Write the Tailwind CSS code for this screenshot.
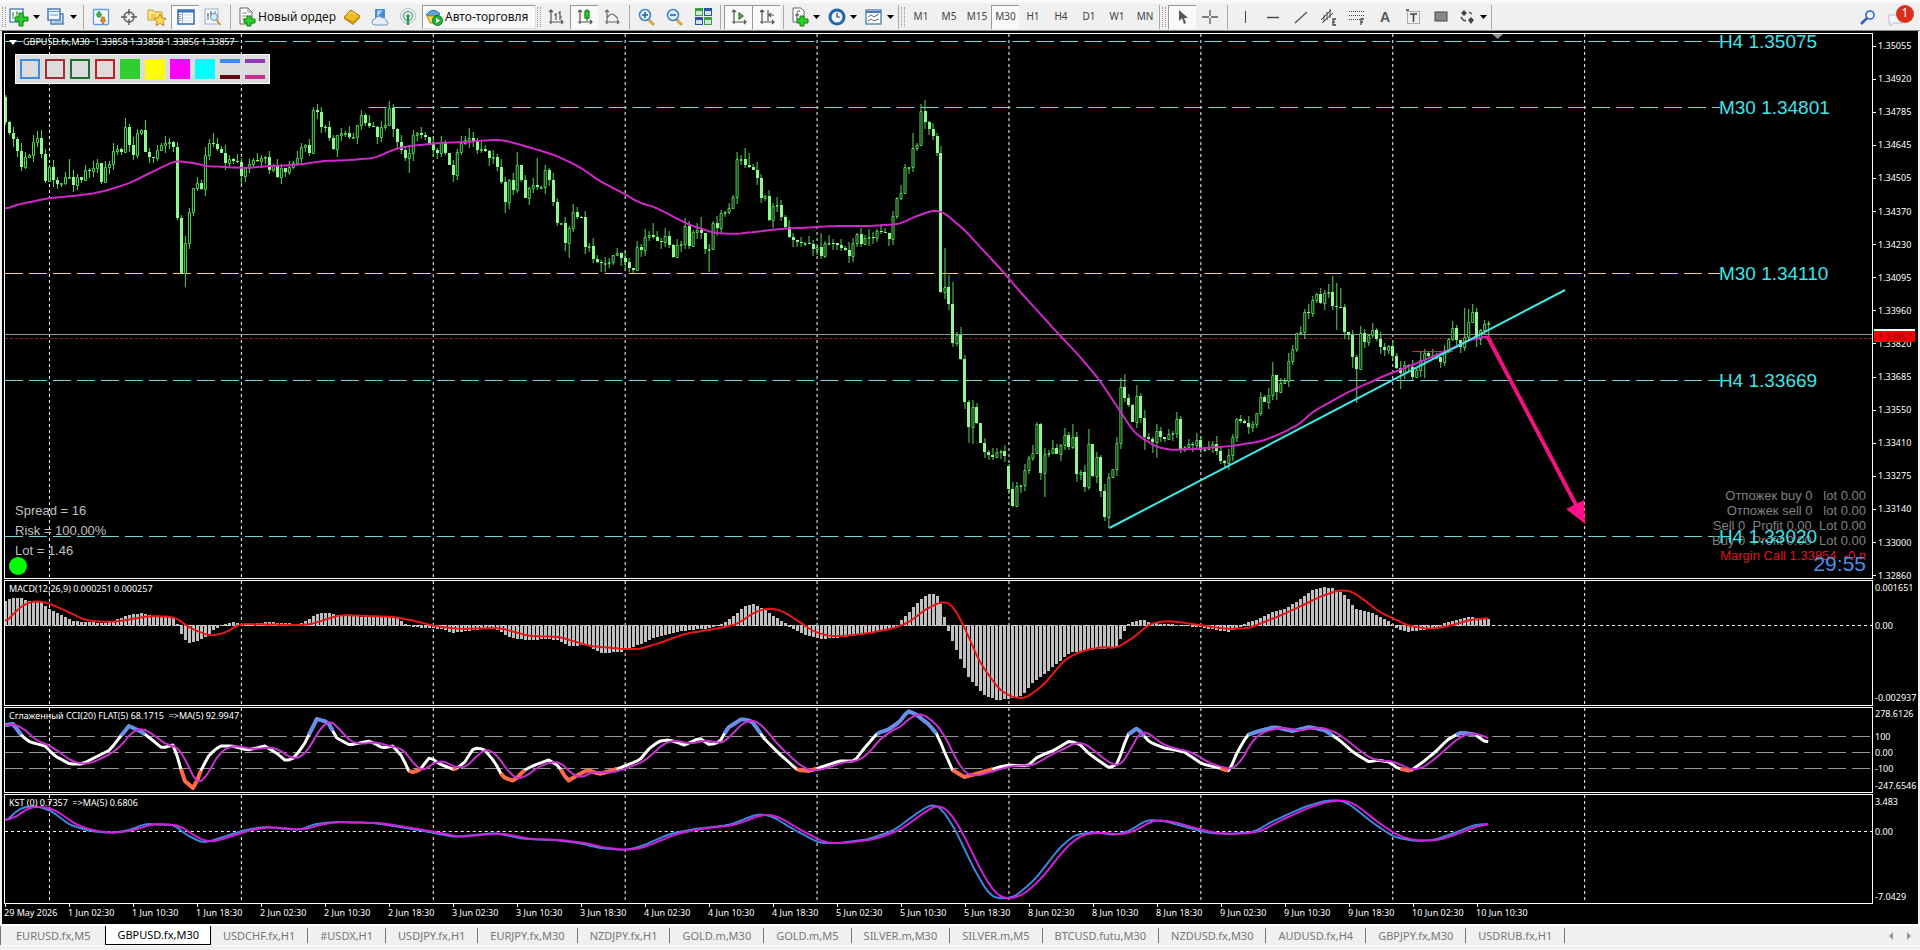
<!DOCTYPE html>
<html lang="ru">
<head>
<meta charset="UTF-8">
<meta name="viewport" content="width=device-width, initial-scale=1.0">
<title>GBPUSD.fx,M30</title>
<script src="https://cdn.jsdelivr.net/npm/@tailwindcss/browser@4"></script>
</head>
<body class="flex h-screen flex-col overflow-hidden bg-[#f0f0f0] font-['Noto_Sans',sans-serif]">

<!-- toolbar -->
<header class="flex h-[31px] shrink-0 items-center border-t-[3px] border-b border-t-[#fafafa] border-b-[#8a8a8a] bg-[#f0f0f0] text-xs text-[#111]">
  <span class="ml-0.5 h-5 w-1 border-x border-dotted border-[#999]"></span>
  <button aria-label="Новый график" class="flex h-6 w-[37px] items-center justify-center gap-1">
    <svg width="20" height="20" viewBox="0 0 20 20"><rect x="1" y="2" width="13" height="13" fill="#fff" stroke="#5b87b5" stroke-width="1.500"/><path d="M4 5v7M3 7h2M8 4v6M7 6h2" stroke="#4a8a4a" fill="none"/><path d="M10 6h4v4h5v4h-5v5h-4v-5H6v-4h4z" fill="#2bd12b" stroke="#118011"/></svg>
    <svg width="7" height="4"><path d="M0 0h7l-3.500 4z"/></svg>
  </button>
  <button aria-label="Профили" class="flex h-6 w-[37px] items-center justify-center gap-1">
    <svg width="20" height="20" viewBox="0 0 20 20"><rect x="5" y="7" width="12" height="10" fill="#dcebfa" stroke="#5b7fa8" stroke-width="1.500"/><rect x="2" y="2" width="12" height="11" fill="#eef6ff" stroke="#4a7ab0" stroke-width="1.500"/><path d="M2 4.500h12M4 8h8M8 15h8" stroke="#6a9bd0"/></svg>
    <svg width="7" height="4"><path d="M0 0h7l-3.500 4z"/></svg>
  </button>
  <span class="mx-[3px] h-6 w-px bg-[#aaa]"></span>
  <button aria-label="Обзор рынка" class="flex h-6 w-7 items-center justify-center"><svg width="18" height="18" viewBox="0 0 18 18"><rect x="1.500" y="1.500" width="15" height="15" rx="1" fill="#f7fbff" stroke="#5d9ad8" stroke-width="1.300"/><path d="M5.500 9V7H4l3-4 3 4H8.500v2z" fill="#3bb53b" stroke="#1b7a1b" stroke-width=".6"/><path d="M9.500 9v3H8l3 4 3-4h-1.500V9z" fill="#e08a2a" stroke="#9a5a10" stroke-width=".6"/></svg></button>
  <button aria-label="Окно данных" class="flex h-6 w-7 items-center justify-center"><svg width="16" height="16" viewBox="0 0 16 16" fill="none" stroke="#555" stroke-width="1.300"><circle cx="8" cy="8" r="5"/><path d="M8 0v6M8 10v6M0 8h6M10 8h6"/></svg></button>
  <button aria-label="Навигатор" class="flex h-6 w-7 items-center justify-center"><svg width="20" height="18" viewBox="0 0 20 18"><path d="M1 2h5l2 2h7v8H1z" fill="#ffe48a" stroke="#c49a2c"/><path d="M4 6h5v6H4z" fill="#f5c84a"/><path d="M13 6l2 4 4 .5-3 3 1 4-4-2-4 2 1-4-3-3 4-.5z" fill="#ffd84d" stroke="#b8860b"/></svg></button>
  <button aria-label="Терминал" class="flex h-6 w-7 items-center justify-center border-t border-l border-[#999] bg-[#f9f9f9]"><svg width="18" height="16" viewBox="0 0 18 16"><rect x="1" y="1" width="16" height="14" fill="#fff" stroke="#2c6ab5" stroke-width="1.500"/><path d="M1 2.500h16" stroke="#2c6ab5" stroke-width="2"/><path d="M5.500 3v12" stroke="#7aa8dc"/><path d="M3 5v8" stroke="#333" stroke-dasharray="1 1"/><path d="M7 6h8M7 9h8M7 12h8" stroke="#c7d9ee"/></svg></button>
  <button aria-label="Тестер стратегий" class="flex h-6 w-7 items-center justify-center"><svg width="18" height="18" viewBox="0 0 18 18"><rect x="1" y="1" width="13" height="15" fill="#f4f8fd" stroke="#9ab0cc"/><path d="M4 12V5M7 10V3M11 8V3M3 7h2M6 5h2" stroke="#667"/><circle cx="10" cy="9" r="3.500" fill="#d8ecff" stroke="#6b8cb5"/><path d="M12.500 12l4 5" stroke="#d9952a" stroke-width="2"/></svg></button>
  <span class="mx-[3px] h-6 w-px bg-[#aaa]"></span>
  <button class="flex h-6 w-[104px] items-center gap-0.5 pl-1 whitespace-nowrap"><svg class="shrink-0" width="18" height="20" viewBox="0 0 18 20"><path d="M2 1h8l4 4v12H2z" fill="#fff" stroke="#666"/><path d="M10 1v4h4M4 6h5M4 9h6M4 12h4" fill="none" stroke="#888"/><path d="M9 9h4v3h4v4h-4v3H9v-3H6v-4h3z" fill="#2bd12b" stroke="#118011"/></svg>Новый ордер</button>
  <button aria-label="MetaEditor" class="flex h-6 w-7 items-center justify-center"><svg width="18" height="18" viewBox="0 0 18 18"><path d="M1 9l7-7 9 6-7 8z" fill="#f0b823" stroke="#a8770d"/><path d="M1 9l9 5 7-6v2l-7 7-9-6z" fill="#c88d12"/><path d="M5 7l4-3 4 3" stroke="#ffe58a" fill="none"/></svg></button>
  <button aria-label="MQL5" class="flex h-6 w-7 items-center justify-center"><svg width="18" height="18" viewBox="0 0 18 18"><rect x="4" y="1" width="10" height="9" rx="1" fill="#3f8fd8"/><path d="M7 8V3h4M7 5h3" stroke="#fff" fill="none"/><path d="M4 17a3 3 0 010-6 4 4 0 017-1 3 3 0 014 3 2 2 0 010 4z" fill="#e6f0fa" stroke="#6f9cc9"/></svg></button>
  <button aria-label="Сигналы" class="flex h-6 w-7 items-center justify-center"><svg width="18" height="18" viewBox="0 0 18 18" fill="none"><circle cx="9" cy="8" r="7.500" stroke="#a8c4cc"/><circle cx="9" cy="8" r="4.500" stroke="#6fae9a" stroke-width="1.500"/><circle cx="9" cy="8" r="1.800" fill="#2c9a4f"/><path d="M9 9v8" stroke="#2c9a4f" stroke-width="2.500"/></svg></button>
  <button class="flex h-6 w-[114px] items-center gap-0.5 border border-[#999] border-r-[#ddd] border-b-[#ddd] bg-[#f9f9f9] pl-0.5 whitespace-nowrap"><svg class="shrink-0" width="18" height="18" viewBox="0 0 18 18"><path d="M1 7q7-9 14-1l-3 2H3z" fill="#5aa7e0" stroke="#2d6ea8"/><path d="M2 8h11l-2 7H5z" fill="#f5d254" stroke="#b68d1a"/><circle cx="12.500" cy="12.500" r="5" fill="#26b33a" stroke="#0d7a1e"/><path d="M11 10l4 2.500-4 2.500z" fill="#fff"/></svg>Авто-торговля</button>
  <span class="mx-px h-5 w-1 border-x border-dotted border-[#999]"></span>
  <button aria-label="Бары" class="flex h-6 w-7 items-center justify-center"><svg width="16" height="16" viewBox="0 0 16 16" fill="none" stroke="#555" stroke-width="1.200"><path d="M3 1v14M1 13h14M1 3l2-2 2 2M13 11l2 2-2 2M6 6h2v5M8 4v7M12 2v9M10 4h2M12 8h2"/></svg></button>
  <button aria-label="Свечи" class="flex h-6 w-7 items-center justify-center border-t border-l border-[#999] bg-[#f9f9f9]"><svg width="16" height="16" viewBox="0 0 16 16" fill="none" stroke="#555" stroke-width="1.200"><path d="M3 1v14M1 13h14M1 3l2-2 2 2M13 11l2 2-2 2"/><path d="M10 0v12" stroke="#118011"/><rect x="8" y="2" width="4" height="7" fill="#2bd12b" stroke="#118011"/></svg></button>
  <button aria-label="Линия" class="flex h-6 w-7 items-center justify-center"><svg width="16" height="16" viewBox="0 0 16 16" fill="none" stroke="#666" stroke-width="1.200"><path d="M3 1v14M1 13h14M1 3l2-2 2 2M13 11l2 2-2 2M3 9q4-6 7-3 2 1 4 4"/></svg></button>
  <span class="mx-[3px] h-6 w-px bg-[#aaa]"></span>
  <button aria-label="Увеличить" class="flex h-6 w-7 items-center justify-center"><svg width="18" height="18" viewBox="0 0 18 18"><path d="M10 11l6 6" stroke="#d9a441" stroke-width="3"/><circle cx="7" cy="7" r="5.500" fill="#dff0ff" stroke="#3b82c4" stroke-width="1.500"/><path d="M4 7h6M7 4v6" stroke="#2563a8" stroke-width="1.600"/></svg></button>
  <button aria-label="Уменьшить" class="flex h-6 w-7 items-center justify-center"><svg width="18" height="18" viewBox="0 0 18 18"><path d="M10 11l6 6" stroke="#d9a441" stroke-width="3"/><circle cx="7" cy="7" r="5.500" fill="#dff0ff" stroke="#3b82c4" stroke-width="1.500"/><path d="M4 7h6" stroke="#2563a8" stroke-width="1.600"/></svg></button>
  <button aria-label="Окна плиткой" class="flex h-6 w-7 items-center justify-center"><svg width="17" height="17" viewBox="0 0 17 17"><path d="M0 0h8v8H0z" fill="#3d9e3d"/><path d="M9 0h8v8H9z" fill="#2a4fa8"/><path d="M0 9h8v8H0z" fill="#2a4fa8"/><path d="M9 9h8v8H9z" fill="#3d9e3d"/><path d="M1 3h6v4H1zM10 3h6v4h-6zM1 12h6v4H1zM10 12h6v4h-6z" fill="#cfe4dc"/></svg></button>
  <span class="mx-[3px] h-6 w-px bg-[#aaa]"></span>
  <button aria-label="Автопрокрутка" class="flex h-6 w-7 items-center justify-center border-t border-l border-[#999] bg-[#f9f9f9]"><svg width="16" height="16" viewBox="0 0 16 16" fill="none" stroke="#555" stroke-width="1.200"><path d="M3 1v14M1 13h14M1 3l2-2 2 2M13 11l2 2-2 2"/><path d="M8 4l4 3-4 3z" fill="#7ab87a" stroke="#386a38"/></svg></button>
  <button aria-label="Сдвиг графика" class="flex h-6 w-7 items-center justify-center border-t border-l border-[#999] bg-[#f9f9f9]"><svg width="16" height="16" viewBox="0 0 16 16" fill="none" stroke="#555" stroke-width="1.200"><path d="M3 1v14M1 13h14M1 3l2-2 2 2M13 11l2 2-2 2M9 1v11M15 6h-5M12 4l-2 2 2 2"/></svg></button>
  <span class="mx-[3px] h-6 w-px bg-[#aaa]"></span>
  <button aria-label="Индикаторы" class="flex h-6 w-[37px] items-center justify-center gap-1"><svg width="18" height="20" viewBox="0 0 18 20"><path d="M2 1h8l3 3v11H2z" fill="#fff" stroke="#666"/><path d="M9 4Q6 3 6 7v5M4 8h4" fill="none" stroke="#444"/><path d="M9 9h4v3h4v4h-4v3H9v-3H6v-4h3z" fill="#2bd12b" stroke="#118011"/></svg><svg width="7" height="4"><path d="M0 0h7l-3.500 4z"/></svg></button>
  <button aria-label="Периоды" class="flex h-6 w-[37px] items-center justify-center gap-1"><svg width="18" height="18" viewBox="0 0 18 18"><circle cx="9" cy="9" r="7" fill="#e9f3fd" stroke="#2464a8" stroke-width="3"/><path d="M9 5v4h3" fill="none" stroke="#444" stroke-width="1.200"/></svg><svg width="7" height="4"><path d="M0 0h7l-3.500 4z"/></svg></button>
  <button aria-label="Шаблоны" class="flex h-6 w-[37px] items-center justify-center gap-1"><svg width="18" height="16" viewBox="0 0 18 16"><rect x="1" y="1" width="15" height="14" fill="#fff" stroke="#4a7ab0" stroke-width="1.300"/><path d="M1 3h15" stroke="#4a7ab0" stroke-width="2"/><path d="M3 8l3-2 3 2 5-3M3 12l3-2 3 2 5-2" fill="none" stroke="#666"/></svg><svg width="7" height="4"><path d="M0 0h7l-3.500 4z"/></svg></button>
  <span class="h-6 w-px bg-[#aaa]"></span>
  <span class="mx-0.5 h-5 w-1 border-x border-dotted border-[#999]"></span>
  <nav class="flex text-[10px] text-[#444]">
    <button class="h-6 w-7">M1</button><button class="h-6 w-7">M5</button><button class="h-6 w-7">M15</button><button class="h-6 w-7 border-t border-l border-[#999] bg-[#f9f9f9]">M30</button><button class="h-6 w-7">H1</button><button class="h-6 w-7">H4</button><button class="h-6 w-7">D1</button><button class="h-6 w-7">W1</button><button class="h-6 w-7">MN</button>
  </nav>
  <span class="h-6 w-px bg-[#aaa]"></span>
  <span class="mx-0.5 h-5 w-1 border-x border-dotted border-[#999]"></span>
  <button aria-label="Курсор" class="flex h-6 w-7 items-center justify-center border-t border-l border-[#999] bg-[#f9f9f9]"><svg width="12" height="16" viewBox="0 0 12 16"><path d="M2 1v11l3-3 2 6 2-1-2-5h4z" fill="#555"/></svg></button>
  <button aria-label="Перекрестие" class="flex h-6 w-7 items-center justify-center"><svg width="16" height="16" viewBox="0 0 16 16"><path d="M8 1v6M8 9v6M0 8h7M9 8h7" stroke="#555" stroke-width="1.300"/></svg></button>
  <span class="mx-[3px] h-6 w-px bg-[#aaa]"></span>
  <button aria-label="Вертикальная линия" class="flex h-6 w-7 items-center justify-center"><svg width="16" height="16"><path d="M8.500 2v12" stroke="#444"/></svg></button>
  <button aria-label="Горизонтальная линия" class="flex h-6 w-7 items-center justify-center"><svg width="16" height="16"><path d="M2 8.500h12" stroke="#444" stroke-width="1.400"/></svg></button>
  <button aria-label="Трендовая линия" class="flex h-6 w-7 items-center justify-center"><svg width="16" height="16"><path d="M2 14L14 3" stroke="#555" stroke-width="1.300"/></svg></button>
  <button aria-label="Канал" class="flex h-6 w-7 items-center justify-center"><svg width="18" height="18" viewBox="0 0 18 18" fill="none" stroke="#444"><path d="M1 12L11 2M2 15L13 5M4 7v7M7 4v8M10 1v9"/><path d="M16 11h-3v6h3M13 14h2" stroke-width="1.300"/></svg></button>
  <button aria-label="Фибоначчи" class="flex h-6 w-7 items-center justify-center"><svg width="18" height="18" viewBox="0 0 18 18" fill="none" stroke="#444"><path d="M1 3.500h15M1 7.500h15M1 11.500h11" stroke-dasharray="1 1"/><path d="M16 11h-3v6M13 14h2" stroke-width="1.300"/></svg></button>
  <button aria-label="Текст" class="h-6 w-7 font-['Liberation_Sans',sans-serif] text-sm font-bold text-[#555]">A</button>
  <button aria-label="Метка" class="flex h-6 w-7 items-center justify-center"><svg width="16" height="16" viewBox="0 0 16 16"><rect x="2.500" y="2.500" width="12" height="12" fill="none" stroke="#666" stroke-dasharray="1 1"/><path d="M5 5h7M8.500 5v8M1 1h3" stroke="#444" stroke-width="1.600"/></svg></button>
  <button aria-label="Прямоугольник" class="flex h-6 w-7 items-center justify-center"><svg width="14" height="12"><rect x="1" y="1" width="12" height="9" fill="#888" stroke="#444"/></svg></button>
  <button aria-label="Стрелки" class="flex h-6 w-9 items-center justify-center gap-1"><svg width="17" height="16" viewBox="0 0 17 16" fill="#444"><path d="M5 1l3 3-3 3-3-3zM12 8l3 3-3 4-3-4z"/><path d="M2 8l2 3 3 1M10 3l3 2" fill="none" stroke="#444" stroke-width="1.400"/></svg><svg width="7" height="4"><path d="M0 0h7l-3.500 4z"/></svg></button>
  <span class="h-6 w-px bg-[#aaa]"></span>
  <span class="flex-1"></span>
  <button aria-label="Поиск" class="flex h-6 w-7 items-center justify-center"><svg width="16" height="16" viewBox="0 0 16 16"><path d="M7 9l-6 6" stroke="#2f5fc4" stroke-width="2.500"/><circle cx="10" cy="6" r="4" fill="#f4f9ff" stroke="#2f5fc4" stroke-width="1.600"/></svg></button>
  <button aria-label="Сообщения" class="relative mr-1.5 flex h-6 w-8 items-center justify-center"><svg width="24" height="20" viewBox="0 0 24 20"><path d="M3 8h14v8H8l-4 3v-3H3z" fill="#f4f4fa" stroke="#b9bbd0"/></svg><span class="absolute top-0 right-0 size-[18px] rounded-full bg-[#d8301c] text-center text-xs text-white">1</span></button>
</header>

<!-- chart window -->
<main class="mx-0.5 flex min-h-0 flex-1 flex-col bg-black pt-0.5 pl-0.5 text-[9px] leading-3 text-white">
  <div class="grid min-h-0 flex-1 grid-cols-[minmax(0,1fr)_45px] grid-rows-[546fr_126fr_86fr_110fr] gap-y-px">

    <section class="relative min-h-0 border border-white">
      <svg id="price" class="block size-full" viewBox="5 34 1868 544" preserveAspectRatio="none"></svg>
      <p class="absolute top-0.5 left-1 flex items-center gap-1.5 whitespace-nowrap"><svg width="8" height="5"><path d="M0 0h8l-4 5z" fill="#fff"/></svg>GBPUSD.fx,M30&nbsp; 1.33858 1.33858 1.33856 1.33857</p>
      <div class="absolute top-5 left-2.5 flex h-[30px] items-center gap-[5px] border border-white bg-[#dcdcdc] px-1">
        <i class="size-5 border-2 border-[#3b8ce8]"></i><i class="size-5 border-2 border-[#a03038]"></i><i class="size-5 border-2 border-[#1d7030]"></i><i class="size-5 border-2 border-[#c02020]"></i>
        <i class="size-5 bg-[#32cd32]"></i><i class="size-5 bg-[#ffff00]"></i><i class="size-5 bg-[#ff00ff]"></i><i class="size-5 bg-[#00ffff]"></i>
        <i class="size-5 border-y-4 border-t-[#3b8ce8] border-b-[#600810]"></i><i class="size-5 border-y-4 border-t-[#9038b8] border-b-[#c83090]"></i>
      </div>
      <div class="absolute bottom-[17px] left-2.5 font-['Liberation_Sans',sans-serif] text-[13px] leading-5 text-[#c0c0c0]">
        <p>Spread = 16</p><p>Risk = 100.00%</p><p>Lot = 1.46</p>
      </div>
      <span class="absolute bottom-[3px] left-1 size-[18px] rounded-full bg-[#00ff00]"></span>
      <div class="absolute right-1.5 bottom-[15px] text-right font-['Liberation_Sans',sans-serif] text-[13px] leading-[15px] text-[#808080]">
        <p class="whitespace-pre">Отпожек buy 0   lot 0.00</p>
        <p class="whitespace-pre">Отпожек sell 0   lot 0.00</p>
        <p class="whitespace-pre">Sell 0  Profit 0.00  Lot 0.00</p>
        <p class="whitespace-pre">Buy 0  Profit 0.00  Lot 0.00</p>
        <p class="whitespace-pre text-[#e0141c]">Margin Call 1.33854  -0 п</p>
      </div>
      <div id="levels" class="font-['Liberation_Sans',sans-serif] text-[19px] leading-5 text-[#3fe4e8]"></div>
      <p class="absolute right-1.5 bottom-0.5 font-['Liberation_Sans',sans-serif] text-[21px] leading-6 text-[#4f8fe8]">29:55</p>
    </section>
    <aside id="priceAxis" class="relative"></aside>

    <section class="relative min-h-0 border border-white">
      <svg id="macd" class="block size-full" viewBox="5 581 1868 124" preserveAspectRatio="none"></svg>
      <p class="absolute top-0.5 left-1 whitespace-nowrap">MACD(12,26,9) 0.000251 0.000257</p>
    </section>
    <aside id="macdAxis" class="relative"></aside>

    <section class="relative min-h-0 border border-white">
      <svg id="cci" class="block size-full" viewBox="5 708 1868 84" preserveAspectRatio="none"></svg>
      <p class="absolute top-0.5 left-1 whitespace-nowrap">Сглаженный CCI(20) FLAT(5) 68.1715&nbsp; =&gt;MA(5) 92.9947</p>
    </section>
    <aside id="cciAxis" class="relative"></aside>

    <section class="relative min-h-0 border border-white">
      <svg id="kst" class="block size-full" viewBox="5 795 1868 108" preserveAspectRatio="none"></svg>
      <p class="absolute top-0.5 left-1 whitespace-nowrap">KST (0) 0.7357&nbsp; =&gt;MA(5) 0.6806</p>
    </section>
    <aside id="kstAxis" class="relative"></aside>
  </div>
  <div id="dates" class="flex h-5 shrink-0 overflow-hidden"></div>
</main>

<!-- chart tabs -->
<footer class="shrink-0 border-t-2 border-t-white bg-[#f0f0f0] pb-1">
  <nav class="flex h-5 items-stretch border-b border-white text-[11px] leading-4 whitespace-nowrap text-[#777]">
    <button class="border-l border-l-[#777] px-[15px]">EURUSD.fx,M5</button>
    <button class="border border-t-0 border-black bg-white px-[11px] text-black">GBPUSD.fx,M30</button>
    <button class="px-3">USDCHF.fx,H1</button>
    <button class="my-0.5 border-l border-[#777] px-3">#USDX,H1</button>
    <button class="my-0.5 border-l border-[#777] px-3">USDJPY.fx,H1</button>
    <button class="my-0.5 border-l border-[#777] px-3">EURJPY.fx,M30</button>
    <button class="my-0.5 border-l border-[#777] px-3">NZDJPY.fx,H1</button>
    <button class="my-0.5 border-l border-[#777] px-3">GOLD.m,M30</button>
    <button class="my-0.5 border-l border-[#777] px-3">GOLD.m,M5</button>
    <button class="my-0.5 border-l border-[#777] px-3">SILVER.m,M30</button>
    <button class="my-0.5 border-l border-[#777] px-3">SILVER.m,M5</button>
    <button class="my-0.5 border-l border-[#777] px-3">BTCUSD.futu,M30</button>
    <button class="my-0.5 border-l border-[#777] px-3">NZDUSD.fx,M30</button>
    <button class="my-0.5 border-l border-[#777] px-3">AUDUSD.fx,H4</button>
    <button class="my-0.5 border-l border-[#777] px-3">GBPJPY.fx,M30</button>
    <button class="my-0.5 border-x border-[#777] px-3">USDRUB.fx,H1</button>
    <span class="flex-1"></span>
    <button aria-label="Назад" class="w-[18px]"><svg class="mx-auto" width="4" height="8"><path d="M4 0v8L0 4z" fill="#999"/></svg></button>
    <button aria-label="Вперёд" class="mr-0.5 w-[18px]"><svg class="mx-auto" width="4" height="8"><path d="M0 0v8l4-4z" fill="#999"/></svg></button>
  </nav>
</footer>

<script>
const $ = id => document.getElementById(id);
const STEP = 4, X0 = 5;

// candle closes, in thirds of a unit down from y = 90
const closes = `95 130 148 182 230 200 195 155 145 192 272 230 270 282 280 262 260 285 262 270 240 242 235 220 275 230 222 182 178 187
110 165 195 130 120 185 200 205 180 165 160 155 172 383 548 460 365 295 278 298 195 160 162 178 190 220 208 212 215 258
235 222 210 212 205 200 240 228 262 235 245 232 220 205 172 165 188 60 65 110 112 145 178 135 130 128 140 140 105 75
98 108 110 142 112 105 55 118 155 180 205 190 135 130 135 142 160 180 190 160 190 225 255 185 160 150 145 152 180 178
182 205 200 230 275 335 270 300 225 270 325 295 285 290 290 240 270 335 400 400 460 415 365 380 382 470 468 508 515 520
520 515 495 490 505 515 535 540 470 480 440 435 440 452 455 437 465 500 465 462 408 468 425 420 430 478 476 398 415 370
365 355 322 208 208 225 230 240 265 325 318 390 348 345 380 410 440 450 455 460 460 462 478 470 498 460 458 460 465 475
480 497 458 432 462 445 440 445 422 425 428 448 378 325 308 232 232 175 165 63 95 118 138 190 605 590 642 760 735 808
935 1012 950 998 1058 1085 1095 1100 1085 1082 1098 1198 1248 1188 1186 1140 1105 1088 1003 1150 1092 1088 1075 1092 1065 1035 1072 1042 1152 1145
1192 1063 1158 1102 1203 1282 1162 1138 1060 890 925 945 995 918 985 1042 1046 1055 1022 1042 1048 1032 1028 988 1078 1070 1062 1065 1050 1080
1078 1070 1062 1082 1112 1118 1095 1042 988 992 998 1010 1002 970 920 935 915 855 905 880 872 812 778 730 725 665 668 630 612 638
608 607 648 650 652 725 735 800 838 728 755 735 720 748 770 780 768 798 835 850 825 830 862 840 810 790 798 802 800 815
780 748 715 750 770 742 695 665 748 720 702 700 728`.trim().split(/\s+/).map(Number);
closes.length = 372;
const highs = {0:15,8:122,16:208,30:83,35:90,52:130,78:43,95:55,116:115,128:185,133:205,162:400,174:380,185:175,186:190,204:430,224:285,227:130,230:30,235:475,236:555,237:575,258:995,267:1002,271:1018,279:865,280:852,283:885,308:985,317:815,332:558,333:580,334:595,342:700,365:655,366:658,370:690};
const lows = {45:590,101:248,125:368,141:505,149:545,150:545,156:547,176:547,211:518,241:1060,242:1062,252:1252,260:1222,276:1315,285:1080,287:1090,288:1105,305:1132,318:930,333:720,337:835,338:940,349:898,355:865,371:740};
const py = v => 90 + v / 3;

function vlines(top, bottom) {
  let s = '';
  for (let x = 49; x < 1600; x += 192) s += `M${x}.5 ${top}V${bottom}`;
  return `<path d="${s}" stroke="#fff" stroke-dasharray="3 3" shape-rendering="crispEdges"/>`;
}
const hline = (y, color, dash, x1 = 5, x2 = 1873) =>
  `<path d="M${x1} ${y}H${x2}" stroke="${color}" stroke-dasharray="${dash}" shape-rendering="crispEdges"/>`;
const line = (pts, color, w) =>
  `<polyline points="${pts.map(p => p[0] + ',' + p[1].toFixed(1)).join(' ')}" fill="none" stroke="${color}" stroke-width="${w}" stroke-linejoin="round"/>`;

// "x,y x,y ..." -> one point per bar
function sample(text) {
  const a = text.trim().split(/\s+/).map(p => p.split(',').map(Number));
  const out = [];
  for (let x = X0, i = 0; x <= a[a.length - 1][0]; x += STEP) {
    while (i < a.length - 2 && a[i + 1][0] < x) i++;
    const t = (x - a[i][0]) / (a[i + 1][0] - a[i][0]);
    out.push([x, a[i][1] + t * (a[i + 1][1] - a[i][1])]);
  }
  return out;
}
const avg = (pts, back, fwd) => pts.map((p, i) => {
  const part = pts.slice(Math.max(0, i - back), i + fwd + 1);
  return [p[0], part.reduce((s, q) => s + q[1], 0) / part.length];
});

// price panel
let wick = '', up = '', down = '';
closes.forEach((c, i) => {
  const o = i === 251 ? 1128 : i ? closes[i - 1] : 20;
  const x = X0 + i * STEP;
  const r1 = (i * 37 + 11) % 23, r2 = (i * 53 + 7) % 19;
  const top = Math.min(o, c), bot = Math.max(o, c);
  const h = highs[i] ?? top - r1 * 1.1, l = lows[i] ?? bot + r2 * 1.3;
  const yt = Math.round(py(top)), yb = Math.max(yt + 1, Math.round(py(bot)));
  if (c > o) {
    wick += `M${x}.5 ${Math.round(py(h))}V${Math.round(py(l))}`;
    down += `M${x - 1} ${yt}h3v${yb - yt}h-3z`;
  } else {
    wick += `M${x}.5 ${Math.round(py(h))}V${yt}M${x}.5 ${yb}V${Math.round(py(l))}`;
    up += `M${x - 1}.5 ${yt}.5h2v${yb - yt}h-2z`;
  }
});
const ma = sample(`5,209 20,204 50,198 73,196 90,194 105,191 130,183 150,173 175,161 195,163 205,166 245,168 270,166 295,165 325,161 350,160 375,158 395,149 410,146 440,143 465,142 490,140 503,140 525,146 555,155 580,167 600,181 625,194 640,203 655,207 690,225 715,233 735,234 755,232 780,229 800,228 835,226 870,226 900,224 917,216 935,210 945,213 965,230 1003,271 1020,291 1060,335 1080,356 1100,380 1120,410 1135,433 1157,447 1173,450 1193,449 1220,447 1233,446 1263,441 1283,433 1300,424 1313,412 1347,393 1387,375 1413,365 1447,351 1470,340 1491,336`);
$('price').innerHTML =
  vlines(34, 578) +
  hline(41.5, '#74d6d6', '18 6', 5, 1721) + hline(107.5, '#74d6d6', '18 6', 369, 1721) +
  hline(273.5, '#f0d070', '18 6', 5, 1721) + hline(380.5, '#74d6d6', '18 6', 5, 1721) + hline(536.5, '#74d6d6', '18 6', 5, 1721) +
  hline(334.5, '#909898', 'none') + hline(338.5, '#902020', '3 2') +
  `<g shape-rendering="crispEdges"><path d="${wick}" stroke="#58d858"/><path d="${up}" fill="#000" stroke="#58d858"/><path d="${down}" fill="#90f890"/></g>` +
  hline(351.5, '#c83048', 'none', 1413, 1454) +
  line(avg(ma, 1, 1), '#d028c8', 2) +
  `<path d="M1110 528L1566 290" stroke="#40e8e8" stroke-width="2"/>` +
  `<path d="M1488 336L1579 509" stroke="#f01480" stroke-width="4"/><path d="M1586 524L1567 509L1585 500z" fill="#ff1088"/>` +
  `<path d="M1493 34h11l-5.500 5z" fill="#909090"/>`;

// MACD
const hist = sample(`5,601 12,598 20,598 25,600 41,602 49,609 60,615 73,621 85,622 106,623 118,619 126,615 141,613 155,616 172,617 178,625 182,636 188,642 196,640 206,635 216,627 225,624 232,622 245,625 265,622 300,624 312,617 318,613 328,613 340,615 365,617 396,617 403,623 412,626 430,627 445,629 453,632 465,630 490,627 500,630 510,637 530,639 550,638 560,640 570,646 585,643 600,652 620,651 640,643 655,636 680,630 710,627 722,624 733,616 745,606 754,604 765,610 773,616 785,623 792,628 805,634 820,638 835,637 865,633 895,627 903,618 918,602 927,594 936,594 942,606 946,620 950,633 958,651 970,678 985,694 997,699 1017,697 1025,692 1035,680 1050,669 1070,652 1085,649 1105,648 1117,646 1124,632 1128,625 1135,621 1143,619 1152,623 1165,624 1200,626 1228,631 1240,627 1247,623 1260,619 1275,611 1285,609 1300,600 1313,590 1323,587 1332,588 1342,592 1350,600 1356,609 1375,614 1390,621 1398,628 1410,631 1420,629 1437,628 1445,623 1455,621 1467,617 1480,618 1490,619`);
const signal = sample(`5,623 20,607 32,601 45,602 60,608 85,620 105,622 120,621 150,616 175,617 190,628 210,636 225,633 240,624 300,625 312,624 340,615 395,617 415,621 435,626 460,629 500,628 530,636 560,637 590,646 625,649 640,649 660,643 685,634 720,628 738,624 755,612 770,608 783,611 800,622 815,632 830,636 845,636 870,633 895,628 910,622 925,610 943,601 953,605 965,627 980,662 1000,690 1015,698 1027,698 1045,684 1065,660 1080,652 1100,647 1117,648 1135,637 1150,624 1165,621 1180,622 1200,625 1228,629 1250,628 1270,620 1280,616 1300,607 1320,597 1340,590 1352,591 1365,600 1380,612 1395,619 1410,626 1430,629 1450,626 1470,620 1490,618`);
$('macd').innerHTML = vlines(581, 705) + hline(625.5, '#fff', '3 3') +
  `<path shape-rendering="crispEdges" fill="#c0c0c0" d="${hist.map(([x, y]) => {
    const v = Math.round(y);
    return v < 626 ? `M${x - 1} ${v}h3V626h-3z` : `M${x - 1} 625h3V${v + 1}h-3z`;
  }).join('')}"/>` + line(avg(signal, 1, 1), '#e81818', 2);

// CCI
const cci = sample(`5,725 13,724 22,736 30,742 45,746 55,756 70,764 82,764 98,756 110,750 120,737 129,726 142,732 150,738 162,748 173,745 178,758 184,780 194,789 202,768 210,754 220,746 232,746 248,750 265,746 278,754 286,761 294,758 304,745 317,719 328,722 337,738 350,745 370,741 383,748 393,746 402,756 410,773 420,770 430,757 440,764 455,770 465,762 474,748 484,749 495,762 503,777 514,781 525,770 535,765 549,760 559,766 568,781 580,774 588,770 600,774 620,768 640,760 650,748 660,741 670,740 685,745 700,738 710,745 720,742 728,728 742,719 752,721 765,739 780,754 798,770 810,771 825,766 840,761 855,761 865,748 878,733 888,730 900,722 908,711 916,714 930,725 938,735 945,752 953,770 965,777 980,773 1000,767 1010,765 1028,766 1038,757 1055,750 1070,741 1080,744 1090,754 1100,761 1110,768 1118,764 1128,735 1138,728 1150,742 1165,748 1185,752 1203,764 1220,768 1230,771 1238,752 1248,735 1260,731 1275,727 1293,731 1310,727 1325,730 1340,740 1355,753 1370,762 1378,760 1390,762 1398,768 1411,771 1425,761 1436,752 1448,740 1460,733 1475,734 1485,741 1491,742`);
const runs = (pts, test, color) => {
  let out = '', run = [];
  pts.concat([null]).forEach(p => {
    if (p && test(p[1])) run.push(p);
    else { if (run.length > 1) out += line(run, color, 4); run = []; }
  });
  return out;
};
$('cci').innerHTML = vlines(708, 792) + [736.5, 752.5, 768.5].map(y => hline(y, '#989898', '18 6')).join('') +
  line(cci, '#fff', 3) + runs(cci, y => y < 737, '#6890e8') + runs(cci, y => y > 768, '#ff6848') +
  line(avg(cci, 4, 0), '#c830d0', 2);

// KST
const kst = avg(sample(`5,822 20,808 35,806 50,810 70,825 90,831 110,833 130,830 145,824 175,825 185,834 203,843 220,838 245,830 265,827 300,830 315,824 335,822 375,823 400,827 430,832 455,837 495,833 525,839 555,840 580,843 600,848 625,850 640,847 670,834 695,829 730,825 758,814 772,816 795,830 820,843 840,843 870,839 895,830 915,815 930,805 940,806 955,828 975,870 990,895 1000,899 1015,897 1035,880 1060,848 1075,835 1095,832 1115,835 1130,831 1147,820 1165,821 1190,828 1210,833 1230,834 1255,832 1270,823 1285,816 1305,807 1325,801 1340,800 1350,804 1375,824 1395,837 1415,841 1435,840 1455,833 1475,825 1490,824`), 1, 1);
$('kst').innerHTML = vlines(795, 903) + hline(831.5, '#fff', '3 3') +
  line(kst, '#3f86e0', 2) + line(avg(kst, 3, 0), '#d020d8', 2);

// scales: labels sit at their share of the panel's height
function axis(id, top, height, items, tick) {
  $(id).innerHTML = items.map(([text, y]) => {
    const at = `top:${(y - top) / height * 100}%`;
    return tick
      ? `<span class="absolute left-0 flex -translate-y-1/2 items-center gap-0.5" style="${at}"><i class="h-px w-[3px] bg-white"></i>${text}</span>`
      : `<span class="absolute left-0.5 -translate-y-1/2" style="${at}">${text}</span>`;
  }).join('');
}
const prices = '1.35055 1.34920 1.34785 1.34645 1.34505 1.34370 1.34230 1.34095 1.33960 1.33820 1.33685 1.33550 1.33410 1.33275 1.33140 1.33000 1.32860'.split(' ');
axis('priceAxis', 33, 546, prices.map((p, i) => [p, 46 + i * 33.1]), true);
$('priceAxis').innerHTML += `<span class="absolute left-px h-[13px] w-[41px] bg-white" style="top:54.2%"></span><span class="absolute left-px h-[11px] w-[41px] bg-[#f00000] pl-1 leading-[11px] text-[#801010]" style="top:54.6%">1.33857</span>`;
axis('macdAxis', 580, 126, [['0.001651', 588], ['0.00', 626], ['-0.002937', 698]]);
axis('cciAxis', 707, 86, [['278.6126', 714], ['100', 737], ['0.00', 753], ['-100', 769], ['-247.6546', 786]]);
axis('kstAxis', 794, 110, [['3.483', 802], ['0.00', 832], ['-7.0429', 897]]);

// level captions
$('levels').innerHTML = [['H4 1.35075', 42], ['M30 1.34801', 108], ['M30 1.34110', 274], ['H4 1.33669', 381], ['H4 1.33020', 537]]
  .map(([t, y]) => `<span class="absolute left-[91.8%] -translate-y-1/2 whitespace-nowrap" style="top:${(y - 34) / 544 * 100}%">${t}</span>`).join('');

// time scale, a tick every 16 bars
const dates = ['29 May 2026'];
for (const d of [1, 2, 3, 4, 5, 8, 9, 10]) for (const t of ['02:30', '10:30', '18:30']) dates.push(`${d} Jun ${t}`);
dates.pop();
$('dates').innerHTML = dates.map(d => `<span class="w-16 shrink-0 whitespace-nowrap"><i class="ml-px block h-[3px] w-px bg-white"></i>${d}</span>`).join('');
</script>
</body>
</html>
